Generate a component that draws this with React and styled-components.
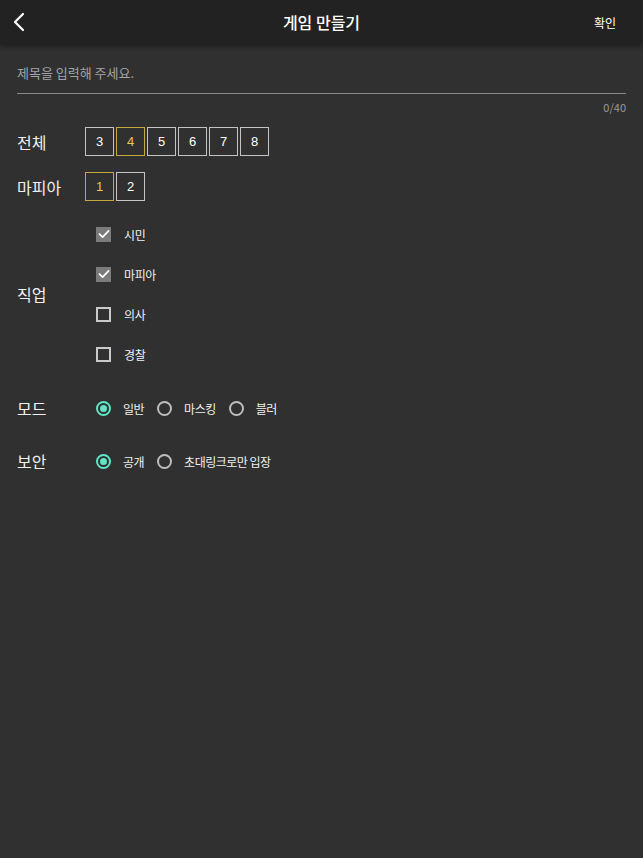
import React, { useState } from "react";
import styled, { createGlobalStyle } from "styled-components";

const Global = createGlobalStyle`
  html, body { margin: 0; padding: 0; background: #303030; }
  body { font-family: "Noto Sans CJK KR", "Noto Sans", sans-serif; color: #f2f2f2; }
  * { box-sizing: border-box; }
`;

const Page = styled.div`
  min-height: 858px;
  background: #303030;
`;

const Header = styled.header`
  position: relative;
  height: 44px;
  background: #222222;
  display: grid;
  grid-template-columns: 80px 1fr 80px;
  align-items: center;
  box-shadow: 0 2px 6px rgba(0, 0, 0, 0.45);
`;

const BackBtn = styled.button`
  background: none;
  border: 0;
  padding: 0 0 0 12px;
  height: 44px;
  display: flex;
  align-items: center;
  cursor: pointer;
`;

const Title = styled.h1`
  margin: 0;
  text-align: center;
  font-size: 16px;
  font-weight: 500;
  color: #ffffff;
`;

const Confirm = styled.button`
  background: none;
  border: 0;
  color: #ffffff;
  font-family: inherit;
  font-size: 12px;
  justify-self: end;
  padding: 0 27px 0 0;
  cursor: pointer;
`;

const Content = styled.main`
  padding: 0 17px;
`;

const TitleInput = styled.input`
  display: block;
  width: 100%;
  height: 42px;
  margin-top: 8px;
  background: transparent;
  border: 0;
  border-bottom: 1px solid #8a8a8a;
  padding: 0;
  color: #eee;
  font-family: inherit;
  font-size: 13px;
  outline: none;
  &::placeholder { color: #a3a3a3; }
`;

const Counter = styled.div`
  text-align: right;
  font-size: 11px;
  line-height: 14px;
  color: #9a9a9a;
  margin-top: 6px;
`;

const Row = styled.div`
  display: flex;
  align-items: center;
  margin-top: ${(p) => p.$mt || 0}px;
  min-height: ${(p) => p.$h || 29}px;
`;

const Label = styled.div`
  width: 68px;
  flex: none;
  font-size: 16px;
  color: #f0f0f0;
`;

const Boxes = styled.div`
  display: flex;
  gap: 2px;
`;

const NumBox = styled.button`
  width: 29px;
  height: 29px;
  padding: 0;
  background: transparent;
  border: 1px solid ${(p) => (p.$active ? "#c7a83c" : "#c4c4c4")};
  color: ${(p) => (p.$active ? "#e9c94a" : "#ffffff")};
  font-family: "Liberation Sans", "Noto Sans", sans-serif;
  font-size: 13px;
  cursor: pointer;
`;

const OptionList = styled.div`
  display: flex;
  flex-direction: column;
  padding-left: 11px;
`;

const CheckRow = styled.label`
  display: flex;
  align-items: center;
  height: 40px;
  gap: 13px;
  font-size: 12px;
  letter-spacing: -0.4px;
  color: #f0f0f0;
  cursor: pointer;
`;

const CheckBox = styled.span`
  width: 15px;
  height: 15px;
  flex: none;
  display: flex;
  align-items: center;
  justify-content: center;
  background: ${(p) => (p.$checked ? "#7b7b7b" : "transparent")};
  border: ${(p) => (p.$checked ? "none" : "2px solid #c9c9c9")};
`;

const RadioGroup = styled.div`
  display: flex;
  align-items: center;
  gap: 13px;
  padding-left: 11px;
`;

const RadioOption = styled.label`
  display: flex;
  align-items: center;
  gap: 12px;
  font-size: 12px;
  letter-spacing: -0.5px;
  color: #f0f0f0;
  cursor: pointer;
`;

const RadioCircle = styled.span`
  width: 15px;
  height: 15px;
  flex: none;
  border-radius: 50%;
  border: 2px solid ${(p) => (p.$checked ? "#5fe6c4" : "#bdbdbd")};
  display: flex;
  align-items: center;
  justify-content: center;
  &::after {
    content: "";
    width: 7px;
    height: 7px;
    border-radius: 50%;
    background: ${(p) => (p.$checked ? "#5fe6c4" : "transparent")};
  }
`;

const Check = () => (
  <svg width="12" height="10" viewBox="0 0 12 10">
    <path d="M1.5 5.2 L4.6 8.2 L10.6 1.8" fill="none" stroke="#fff" strokeWidth="1.7" strokeLinecap="round" strokeLinejoin="round" />
  </svg>
);

export default function App() {
  const [total, setTotal] = useState(4);
  const [mafia, setMafia] = useState(1);
  const [jobs, setJobs] = useState({ 시민: true, 마피아: true, 의사: false, 경찰: false });
  const [mode, setMode] = useState("일반");
  const [sec, setSec] = useState("공개");

  return (
    <Page>
      <Global />
      <Header>
        <BackBtn aria-label="뒤로">
          <svg width="14" height="20" viewBox="0 0 14 20">
            <path d="M11 2 L3 10 L11 18" fill="none" stroke="#fff" strokeWidth="2.2" strokeLinecap="round" strokeLinejoin="round" />
          </svg>
        </BackBtn>
        <Title>게임 만들기</Title>
        <Confirm>확인</Confirm>
      </Header>
      <Content>
        <TitleInput placeholder="제목을 입력해 주세요." maxLength={40} />
        <Counter>0/40</Counter>
        <Row $mt={13}>
          <Label>전체</Label>
          <Boxes>
            {[3, 4, 5, 6, 7, 8].map((n) => (
              <NumBox key={n} $active={n === total} onClick={() => setTotal(n)}>{n}</NumBox>
            ))}
          </Boxes>
        </Row>
        <Row $mt={16}>
          <Label>마피아</Label>
          <Boxes>
            {[1, 2].map((n) => (
              <NumBox key={n} $active={n === mafia} onClick={() => setMafia(n)}>{n}</NumBox>
            ))}
          </Boxes>
        </Row>
        <Row $mt={13}>
          <Label>직업</Label>
          <OptionList>
            {Object.keys(jobs).map((j) => (
              <CheckRow key={j} onClick={() => setJobs({ ...jobs, [j]: !jobs[j] })}>
                <CheckBox $checked={jobs[j]}>{jobs[j] && <Check />}</CheckBox>
                {j}
              </CheckRow>
            ))}
          </OptionList>
        </Row>
        <Row $mt={14} $h={40}>
          <Label>모드</Label>
          <RadioGroup>
            {["일반", "마스킹", "블러"].map((m) => (
              <RadioOption key={m} onClick={() => setMode(m)}>
                <RadioCircle $checked={mode === m} />
                {m}
              </RadioOption>
            ))}
          </RadioGroup>
        </Row>
        <Row $mt={13} $h={40}>
          <Label>보안</Label>
          <RadioGroup>
            {["공개", "초대링크로만 입장"].map((m) => (
              <RadioOption key={m} onClick={() => setSec(m)}>
                <RadioCircle $checked={sec === m} />
                {m}
              </RadioOption>
            ))}
          </RadioGroup>
        </Row>
      </Content>
    </Page>
  );
}
